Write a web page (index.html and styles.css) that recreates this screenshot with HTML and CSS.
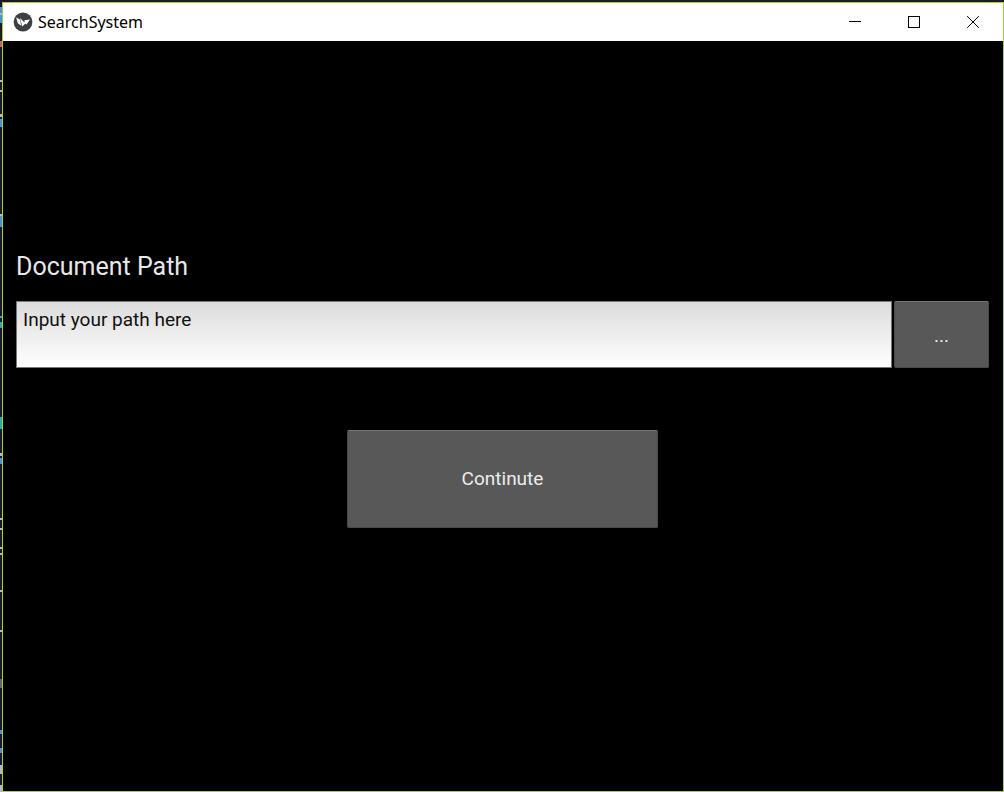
FILE: index.html
```html
<!DOCTYPE html>
<html lang="en">
<head>
<meta charset="utf-8">
<title>SearchSystem</title>
<link rel="stylesheet" href="styles.css">
</head>
<body>
<div class="desktop">
  <svg class="backdrop-edge" width="2" height="790" viewBox="0 0 2 790" shape-rendering="crispEdges" aria-hidden="true">
    <path fill="#4a93cf" d="M0 5h2v16H0zM0 117h2v8H0zM0 214h2v11H0zM0 456h2v6H0zM0 728h2v4H0zM0 746h2v5H0z"/>
    <path fill="#b9b9b9" d="M0 11h2v2H0zM0 78h2v2H0zM0 88h2v2H0zM0 112h2v3H0zM0 212h2v2H0zM0 451h2v3H0zM0 516h2v2H0zM0 526h2v2H0zM0 545h2v2H0zM0 551h2v2H0zM0 588h2v2H0zM0 628h2v2H0zM0 763h2v9H0zM0 783h2v7H0z"/>
    <path fill="#c9664c" d="M0 39h2v6H0z"/>
    <path fill="#2fae91" d="M0 314h2v2H0zM0 320h2v6H0zM0 415h2v12H0z"/>
    <path fill="#666" d="M0 677h2v9H0z"/>
  </svg>
  <div class="window">
    <header class="titlebar">
      <svg class="logo" width="20" height="20" viewBox="0 0 20 20" aria-hidden="true">
        <circle cx="10" cy="10" r="9.4" fill="#3d3f42"/>
        <path fill="#fff" d="M3.200 5.500L7 7.500l1.300 6.300-3.500-2.600zM7 6l5.500 5.500-3.300 3zM11.500 8.200l5.500-.7-3.500 5-2-1.800z"/>
      </svg>
      <h1 class="title">SearchSystem</h1>
      <div class="controls">
        <button class="control" type="button" aria-label="Minimize">
          <svg width="12" height="12" viewBox="0 0 12 12" shape-rendering="crispEdges"><path d="M0 5.500h12"/></svg>
        </button>
        <button class="control" type="button" aria-label="Maximize">
          <svg width="12" height="12" viewBox="0 0 12 12" shape-rendering="crispEdges"><path d="M.5.5h11v11H.5z"/></svg>
        </button>
        <button class="control" type="button" aria-label="Close">
          <svg width="12" height="12" viewBox="0 0 12 12"><path d="M.2.2l11.600 11.600M11.800.2L.2 11.800"/></svg>
        </button>
      </div>
    </header>
    <main class="content">
      <label class="label" for="path">Document Path</label>
      <div class="path-row">
        <textarea class="path-input" id="path" spellcheck="false">Input your path here</textarea>
        <button class="button browse" type="button">...</button>
      </div>
      <button class="button continue" type="button">Continute</button>
    </main>
  </div>
</div>
</body>
</html>
```
FILE: styles.css
```css
* {
  box-sizing: border-box;
}

body {
  margin: 0;
  background: #1c1c1c;
  font-family: Roboto, "Liberation Sans", sans-serif;
}

.desktop {
  display: flex;
  min-height: 100vh;
  padding-top: 2px;
}

.backdrop-edge {
  flex: none;
}

.window {
  flex: 1;
  display: flex;
  flex-direction: column;
  border: 1px solid #a6ce39;
  background: #000;
}

.titlebar {
  display: flex;
  align-items: center;
  height: 38px;
  padding: 0 1px 0 10px;
  background: #fff;
}

.logo {
  flex: none;
  margin-right: 5px;
}

.title {
  flex: 1;
  margin: 0;
  color: #000;
  font: 400 16px/20px "Noto Sans", "Open Sans", sans-serif;
}

.controls {
  display: flex;
  align-self: stretch;
}

.control {
  display: flex;
  align-items: center;
  justify-content: center;
  width: 59px;
  padding: 0;
  border: 0;
  background: none;
}

.control svg {
  fill: none;
  stroke: #000;
}

.content {
  flex: 1;
  display: flex;
  flex-direction: column;
  padding: 209px 14px 0 13px;
}

.label {
  color: #e8e8e8;
  font-size: 25px;
  line-height: 34px;
}

.path-row {
  display: flex;
  gap: 2px;
  height: 67px;
  margin-top: 17px;
}

.path-input {
  flex: 1;
  min-width: 0;
  padding: 6px;
  border: 1px solid #777;
  outline: 0;
  resize: none;
  overflow: hidden;
  background: linear-gradient(#dcdcdc, #fff);
  color: #111;
  font: 400 19px/24px Roboto, "Liberation Sans", sans-serif;
}

.button {
  border: 1px solid #4a4a4a;
  border-top-color: #777;
  border-radius: 2px;
  background: #585858;
  color: #ececec;
  font: 400 19px/24px Roboto, "Liberation Sans", sans-serif;
}

.browse {
  width: 95px;
  padding: 2px 0 0;
}

.continue {
  align-self: center;
  width: 32%;
  height: 98px;
  margin-top: 62px;
}
```
